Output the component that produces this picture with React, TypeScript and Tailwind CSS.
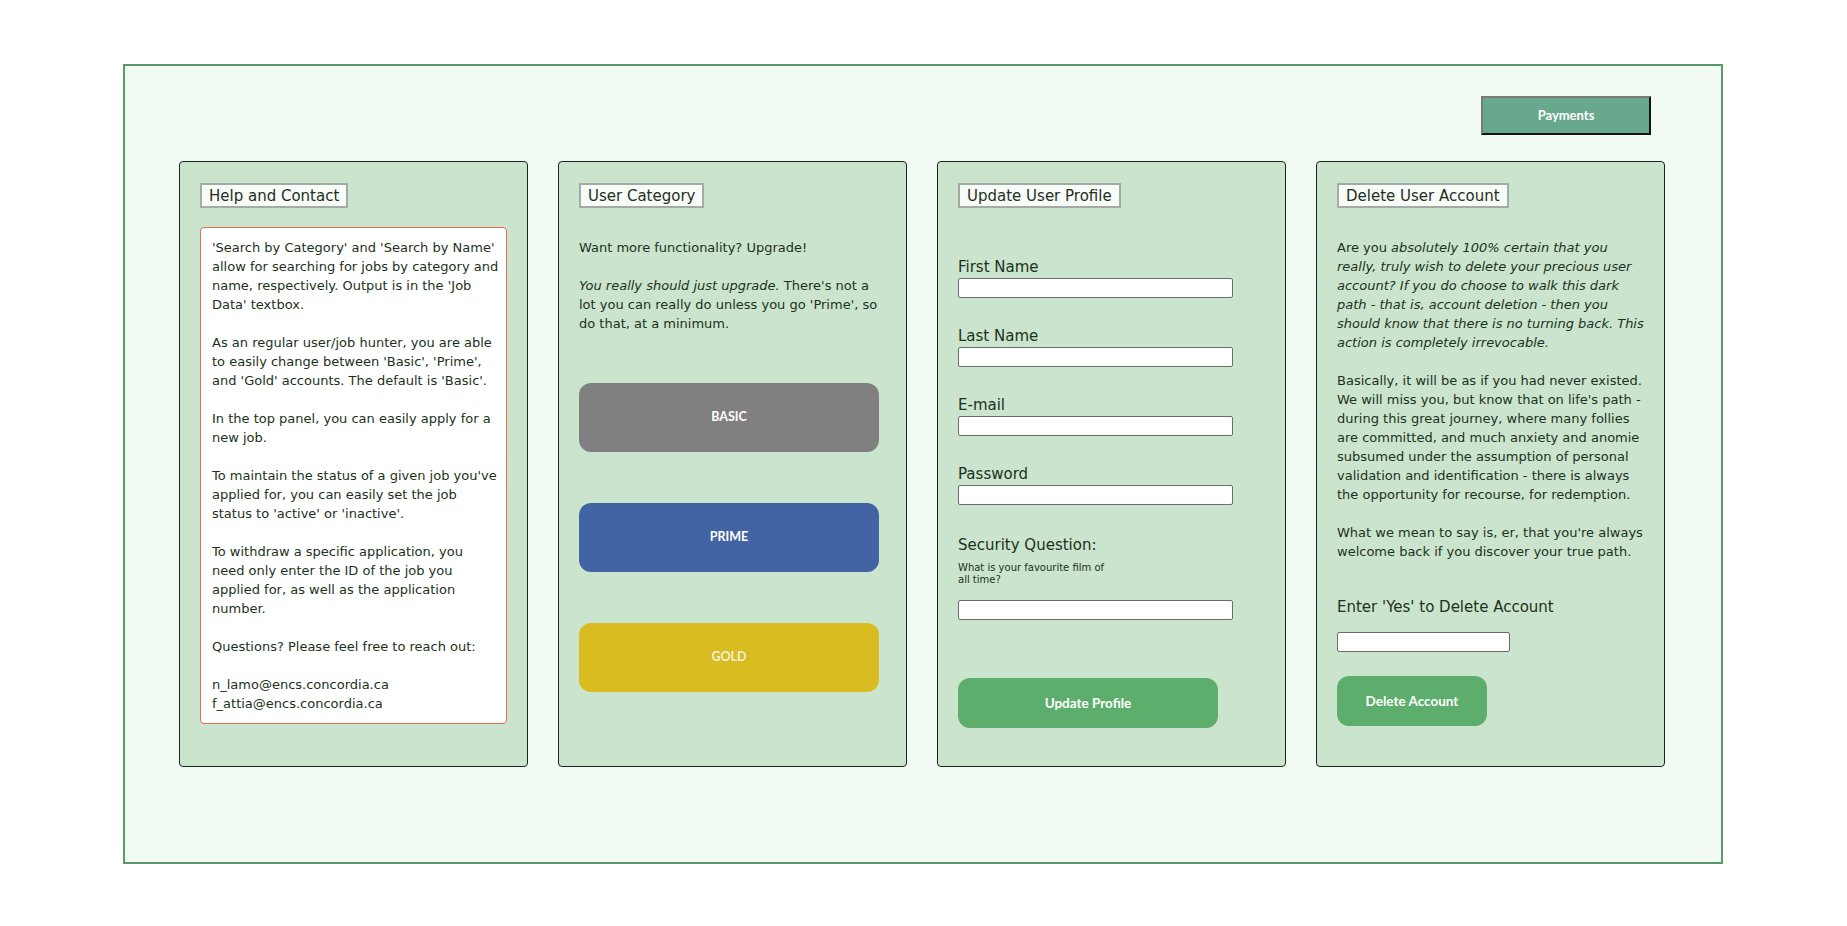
import React from "react";

const body = "font-['DejaVu_Sans',sans-serif]";
const btnFont = "font-['Lato',sans-serif] font-bold";

function Heading({ children }: { children: React.ReactNode }) {
  return (
    <div className="flex">
      <div className={`${body} border-2 border-[#a3aca4] bg-[#f7fcf8] px-[7px] pt-[1px] text-[15px] leading-[20px] text-[#1f2f22] whitespace-nowrap`}>
        {children}
      </div>
    </div>
  );
}

function Lines({ lines }: { lines: React.ReactNode[] }) {
  return (
    <div className="whitespace-nowrap">
      {lines.map((l, i) => (
        <div key={i} className="h-[19px]">
          {l === "" ? "\u00a0" : l}
        </div>
      ))}
    </div>
  );
}

function Field({ label, first }: { label: string; first?: boolean }) {
  return (
    <div className={first ? "mt-[49px]" : "mt-[28px]"}>
      <div className="text-[15px] leading-[20px] text-[#1b3220]">{label}</div>
      <input className="mt-[1px] block h-[20px] w-[275px] rounded-[2px] border border-[#6b6f6b] bg-white" />
    </div>
  );
}

export default function App() {
  const panel =
    "w-[349px] h-[606px] shrink-0 rounded-[4px] border border-[#182818] bg-[#cbe4cd] pt-[21px] px-[20px]";

  return (
    <div className={`min-h-screen bg-white pt-[64px] ${body}`}>
      <div className="ml-[123px] flex h-[800px] w-[1600px] flex-col border-2 border-[#5a9a6a] bg-[#f1faf3]">
        <div className="flex justify-end pr-[70px] pt-[30px]">
          <button
            className={`${btnFont} h-[39px] w-[170px] border-2 border-t-[#7a7a7a] border-l-[#7a7a7a] border-b-[#141414] border-r-[#141414] bg-[#68a88c] text-[13px] text-white`}
          >
            Payments
          </button>
        </div>

        <div className="mt-[26px] flex gap-[30px] pl-[54px]">
          {/* Help and Contact */}
          <div className={panel}>
            <Heading>Help and Contact</Heading>
            <div className="mt-[19px] rounded-[4px] border border-[#e0704c] bg-white px-[11px] py-[10px] text-[13px] leading-[19px] text-[#1b3220]">
              <Lines
                lines={[
                  "'Search by Category' and 'Search by Name'",
                  "allow for searching for jobs by category and",
                  "name, respectively. Output is in the 'Job",
                  "Data' textbox.",
                  "",
                  "As an regular user/job hunter, you are able",
                  "to easily change between 'Basic', 'Prime',",
                  "and 'Gold' accounts. The default is 'Basic'.",
                  "",
                  "In the top panel, you can easily apply for a",
                  "new job.",
                  "",
                  "To maintain the status of a given job you've",
                  "applied for, you can easily set the job",
                  "status to 'active' or 'inactive'.",
                  "",
                  "To withdraw a specific application, you",
                  "need only enter the ID of the job you",
                  "applied for, as well as the application",
                  "number.",
                  "",
                  "Questions? Please feel free to reach out:",
                  "",
                  "n_lamo@encs.concordia.ca",
                  "f_attia@encs.concordia.ca",
                ]}
              />
            </div>
          </div>

          {/* User Category */}
          <div className={panel}>
            <Heading>User Category</Heading>
            <div className="mt-[30px] text-[13px] leading-[19px] text-[#1b3220]">
              <Lines
                lines={[
                  "Want more functionality? Upgrade!",
                  "",
                  <span>
                    <i>You really should just upgrade.</i> There's not a
                  </span>,
                  "lot you can really do unless you go 'Prime', so",
                  "do that, at a minimum.",
                ]}
              />
            </div>
            <div className="mt-[50px] flex flex-col gap-[51px]">
              <button className={`${btnFont} h-[69px] w-[300px] rounded-[12px] bg-[#808080] text-[12.5px] text-white`}>
                BASIC
              </button>
              <button className={`${btnFont} h-[69px] w-[300px] rounded-[12px] bg-[#4264a4] text-[12.5px] text-white`}>
                PRIME
              </button>
              <button className={`${btnFont} h-[69px] w-[300px] rounded-[12px] bg-[#d8bc20] text-[12.5px] text-[#f4f0d8]`}>
                GOLD
              </button>
            </div>
          </div>

          {/* Update User Profile */}
          <div className={panel}>
            <Heading>Update User Profile</Heading>
            <Field label="First Name" first />
            <Field label="Last Name" />
            <Field label="E-mail" />
            <Field label="Password" />
            <div className="mt-[30px]">
              <div className="text-[15px] leading-[20px] text-[#1b3220]">Security Question:</div>
              <div className="mt-[7px] text-[10px] leading-[11.5px] text-[#1b3220]">
                What is your favourite film of
                <br />
                all time?
              </div>
              <input className="mt-[15px] block h-[20px] w-[275px] rounded-[2px] border border-[#6b6f6b] bg-white" />
            </div>
            <button className={`${btnFont} mt-[58px] h-[50px] w-[260px] rounded-[12px] bg-[#5dae6c] text-[13.5px] text-white`}>
              Update Profile
            </button>
          </div>

          {/* Delete User Account */}
          <div className={panel}>
            <Heading>Delete User Account</Heading>
            <div className="mt-[30px] text-[13px] leading-[19px] text-[#1b3220]">
              <Lines
                lines={[
                  <span>
                    Are you <i>absolutely 100% certain that you</i>
                  </span>,
                  <i>really, truly wish to delete your precious user</i>,
                  <i>account? If you do choose to walk this dark</i>,
                  <i>path - that is, account deletion - then you</i>,
                  <i>should know that there is no turning back. This</i>,
                  <i>action is completely irrevocable.</i>,
                  "",
                  "Basically, it will be as if you had never existed.",
                  "We will miss you, but know that on life's path -",
                  "during this great journey, where many follies",
                  "are committed, and much anxiety and anomie",
                  "subsumed under the assumption of personal",
                  "validation and identification - there is always",
                  "the opportunity for recourse, for redemption.",
                  "",
                  "What we mean to say is, er, that you're always",
                  "welcome back if you discover your true path.",
                ]}
              />
            </div>
            <div className="mt-[36px] text-[15px] leading-[20px] text-[#1b3220]">Enter 'Yes' to Delete Account</div>
            <input className="mt-[15px] block h-[20px] w-[173px] rounded-[2px] border border-[#6b6f6b] bg-white" />
            <button className={`${btnFont} mt-[24px] h-[50px] w-[150px] rounded-[12px] bg-[#5dae6c] text-[13.5px] text-white`}>
              Delete Account
            </button>
          </div>
        </div>
      </div>
    </div>
  );
}
